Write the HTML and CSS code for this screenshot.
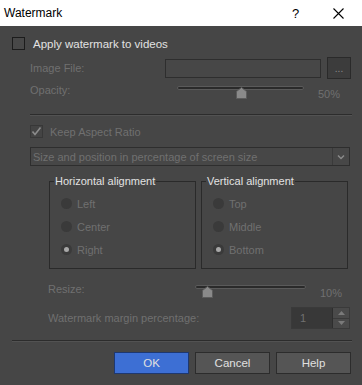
FILE: index.html
```html
<!DOCTYPE html>
<html lang="en">
<head>
    <meta charset="UTF-8">
    <title>Watermark</title>
    <link rel="stylesheet" href="styles.css">
</head>
<body>
    <div class="titlebar">
        <span class="title">Watermark</span>
        <span class="help">?</span>
        <span class="close">
            <svg width="11" height="11" viewBox="0 0 11 11"><path d="M0.5 0.5 L10.5 10.5 M10.5 0.5 L0.5 10.5" stroke="#000" stroke-width="1.1" fill="none"/></svg>
        </span>
    </div>

    <div class="row apply">
        <span class="check"></span>
        <span>Apply watermark to videos</span>
    </div>

    <div class="row file">
        <span class="label">Image File:</span>
        <span class="input"></span>
        <span class="browse">...</span>
    </div>

    <div class="row opacity">
        <span class="label">Opacity:</span>
        <div class="slider">
            <div class="track"></div>
            <svg class="thumb" style="left: 59px" width="11" height="12" viewBox="0 0 11 12"><path d="M5.5 0.5 L10.5 4.5 L10.5 11.5 L0.5 11.5 L0.5 4.5 Z" fill="#8a8a8a" stroke="#5c5c5c"/></svg>
        </div>
        <span class="value">50%</span>
    </div>

    <div class="sep inner"></div>

    <div class="row keep">
        <span class="check checked">
            <svg width="11" height="11" viewBox="0 0 11 11"><path d="M1.5 5.5 L4 8.5 L9.5 1.5" stroke="#8c8c8c" stroke-width="1.6" fill="none"/></svg>
        </span>
        <span class="dim">Keep Aspect Ratio</span>
    </div>

    <div class="select">
        <span class="dim">Size and position in percentage of screen size</span>
        <span class="arrow">
            <svg width="8" height="6" viewBox="0 0 8 6"><path d="M1 1.5 L4 4.5 L7 1.5" stroke="#8a8a8a" stroke-width="1.5" fill="none"/></svg>
        </span>
    </div>

    <div class="groups">
        <fieldset class="group">
            <legend>Horizontal alignment</legend>
            <div class="options">
                <div class="radio"><span class="dot"></span><span class="dim">Left</span></div>
                <div class="radio"><span class="dot"></span><span class="dim">Center</span></div>
                <div class="radio"><span class="dot on"></span><span class="dim">Right</span></div>
            </div>
        </fieldset>
        <fieldset class="group">
            <legend>Vertical alignment</legend>
            <div class="options">
                <div class="radio"><span class="dot"></span><span class="dim">Top</span></div>
                <div class="radio"><span class="dot"></span><span class="dim">Middle</span></div>
                <div class="radio"><span class="dot on"></span><span class="dim">Bottom</span></div>
            </div>
        </fieldset>
    </div>

    <div class="row resize">
        <span class="label">Resize:</span>
        <div class="slider">
            <div class="track"></div>
            <svg class="thumb" style="left: 7px" width="11" height="12" viewBox="0 0 11 12"><path d="M5.5 0.5 L10.5 4.5 L10.5 11.5 L0.5 11.5 L0.5 4.5 Z" fill="#8a8a8a" stroke="#5c5c5c"/></svg>
        </div>
        <span class="value">10%</span>
    </div>

    <div class="row margin">
        <span class="label">Watermark margin percentage:</span>
        <div class="spin">
            <span class="spin-edit">1</span>
            <span class="spin-btns">
                <span class="spin-up"><svg width="7" height="4" viewBox="0 0 7 4"><path d="M0 4 L3.5 0 L7 4 Z" fill="#7a7a7a"/></svg></span>
                <span class="spin-down"><svg width="7" height="4" viewBox="0 0 7 4"><path d="M0 0 L3.5 4 L7 0 Z" fill="#7a7a7a"/></svg></span>
            </span>
        </div>
    </div>

    <div class="sep outer"></div>

    <div class="buttons">
        <button class="primary">OK</button>
        <button>Cancel</button>
        <button>Help</button>
    </div>
</body>
</html>
```

FILE: styles.css
```css
body {
    margin: 0;
    width: 362px;
    height: 385px;
    overflow: hidden;
    background: #464646;
    color: #dcdcdc;
    font-family: "Liberation Sans", Arial, sans-serif;
    font-size: 11px;
}
.titlebar {
    height: 26px;
    background: #fff;
    color: #000;
    display: flex;
    align-items: center;
    font-size: 12px;
}
.title { margin-left: 4px; flex: 1; }
.help { width: 10px; margin-right: 31px; font-size: 13px; }
.close { width: 11px; height: 11px; margin-right: 18px; display: flex; }

.row { display: flex; align-items: center; }
.label { color: #707070; flex: none; }
.dim { color: #707070; }

.check {
    width: 11px;
    height: 11px;
    border: 1px solid #1c1c1c;
    background: #484848;
    flex: none;
    display: flex;
}
.check.checked { border-color: #383838; background: #444; }

.apply { margin-top: 11px; height: 13px; padding-left: 12px; gap: 8px; font-size: 11.5px; color: #e2e2e2; }

.file { margin-top: 7px; height: 22px; padding-left: 30px; }
.file .label { width: 135px; }
.input {
    width: 154px;
    height: 17px;
    border: 1px solid #2e2e2e;
    background: #474747;
}
.browse {
    margin-left: 6px;
    width: 22px;
    height: 20px;
    border: 1px solid #2a2a2a;
    background: #3c3c3c;
    color: #8a8a8a;
    font-size: 10px;
    display: flex;
    align-items: center;
    justify-content: center;
}

.opacity, .resize { height: 18px; align-items: flex-start; }
.opacity { margin-top: 3px; padding-left: 30px; }
.opacity .label { width: 147px; line-height: 16px; }
.resize { margin-top: 12px; padding-left: 48px; }
.resize .label { width: 147px; line-height: 16px; }

.slider { position: relative; margin-top: 4px; }
.opacity .slider { width: 127px; }
.resize .slider { width: 111px; }
.track {
    height: 2px;
    border: 1px solid #5a5a5a;
    border-radius: 3px;
    background: #2a2a2a;
}
.thumb { position: absolute; top: 1px; }
.value {
    width: 36px;
    margin-top: 4px;
    line-height: 16px;
    text-align: right;
    color: #707070;
}

.sep { height: 1px; background: #2c2c2c; border-bottom: 1px solid #525252; }
.sep.inner { margin: 14px 10px 0 30px; }
.sep.outer { margin: 11px 10px 0 12px; }

.keep { margin-top: 9px; height: 13px; padding-left: 30px; gap: 7px; }

.select {
    margin: 9px 12px 0 30px;
    height: 17px;
    border: 1px solid #2e2e2e;
    background: #474747;
    display: flex;
    align-items: center;
}
.select .dim { flex: 1; padding-left: 2px; }
.arrow {
    width: 16px;
    height: 17px;
    border-left: 1px solid #3a3a3a;
    display: flex;
    align-items: center;
    justify-content: center;
}

.groups { display: flex; gap: 5px; margin-top: 8px; padding-left: 49px; }
.group {
    margin: 0;
    padding: 0 0 0 4px;
    min-width: 0;
    width: 141px;
    height: 93px;
    border: 1px solid #2a2a2a;
}
.group legend { padding: 0 1px; line-height: 14px; color: #e2e2e2; }
.options { margin-top: 4px; padding-left: 7px; }
.radio { height: 23px; display: flex; align-items: center; gap: 5px; }
.dot {
    width: 11px;
    height: 11px;
    border-radius: 50%;
    background: #3a3a3a;
    display: flex;
    align-items: center;
    justify-content: center;
}
.dot.on::after {
    content: "";
    width: 5px;
    height: 5px;
    border-radius: 50%;
    background: #a8a8a8;
}

.margin {
    margin-top: 8px;
    height: 22px;
    padding: 0 12px 0 48px;
    justify-content: space-between;
}
.spin {
    width: 57px;
    height: 20px;
    border: 1px solid #3a3a3a;
    display: flex;
}
.spin-edit {
    width: 32px;
    padding-left: 8px;
    background: #383838;
    color: #707070;
    line-height: 20px;
    border-right: 1px solid #2e2e2e;
}
.spin-btns { flex: 1; display: flex; flex-direction: column; background: #4a4a4a; }
.spin-up, .spin-down { flex: 1; display: flex; align-items: center; justify-content: center; }
.spin-up { border-bottom: 1px solid #3a3a3a; }

.buttons { display: flex; gap: 6px; margin-top: 10px; padding-left: 114px; }
button {
    width: 75px;
    height: 22px;
    border: 1px solid #2c2c2c;
    background: #555;
    color: #e0e0e0;
    font-family: "Liberation Sans", Arial, sans-serif;
    font-size: 11.5px;
    padding: 0;
}
button.primary { background: #3d6fd4; border-color: #1e3870; }
```
